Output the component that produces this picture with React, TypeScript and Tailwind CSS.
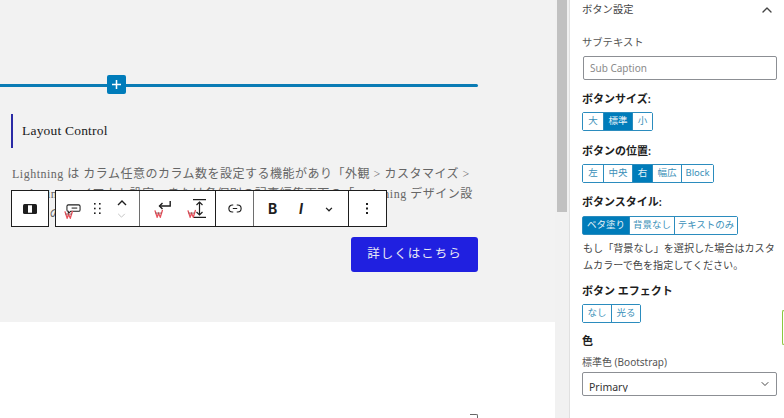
import { ChevronDown, ChevronUp } from "lucide-react";

const sansFont = "font-['Noto_Sans','Open_Sans','Noto_Sans_CJK_JP',sans-serif]";
const serifFont = "font-['Liberation_Serif','Noto_Sans_CJK_JP',serif]";

function VkMark({ className }: { className: string }) {
  return (
    <svg viewBox="0 0 10 10" className={`absolute h-[9px] w-[9px] ${className}`} fill="none">
      <path d="M1 1.5 L3.5 9 L5 5 L7 9 L9.5 1" stroke="#e8515c" strokeWidth="1.5" />
      <path d="M1.5 4.5 H8.5" stroke="#6b3a3a" strokeWidth="0.8" />
    </svg>
  );
}

function SegmentGroup({ items, active }: { items: { label: string; w: string }[]; active?: number }) {
  return (
    <div className="flex h-[19px] w-fit rounded-[2px] border border-[#2b8cbe]">
      {items.map((item, i) => (
        <div
          key={item.label}
          className={`flex items-center justify-center text-[9.5px] ${item.w} ${i > 0 ? "border-l border-[#2b8cbe]" : ""} ${
            i === active ? "bg-[#007cba] text-[#e8f3f8]" : "bg-white text-[#3a8fb8]"
          }`}
        >
          {item.label}
        </div>
      ))}
    </div>
  );
}

function Dots({ className }: { className: string }) {
  return (
    <svg viewBox="0 0 7 11" className={`absolute h-[11px] w-[7px] ${className}`} fill="#1e1e1e">
      <rect x="0" y="0" width="1.6" height="1.6" />
      <rect x="5" y="0" width="1.6" height="1.6" />
      <rect x="0" y="4.7" width="1.6" height="1.6" />
      <rect x="5" y="4.7" width="1.6" height="1.6" />
      <rect x="0" y="9.4" width="1.6" height="1.6" />
      <rect x="5" y="9.4" width="1.6" height="1.6" />
    </svg>
  );
}

function Toolbar() {
  return (
    <div className="absolute left-[11px] top-[190px] flex gap-[6px] text-[#1e1e1e]">
      <div className="flex h-[37px] w-[38px] items-center justify-center border border-[#1e1e1e] bg-white">
        <svg viewBox="0 0 14 10" className="h-[10px] w-[14px]">
          <rect x="0" y="0" width="14" height="10" rx="1.5" fill="#1e1e1e" />
          <rect x="5" y="1.3" width="4" height="7.4" fill="white" />
        </svg>
      </div>
      <div className="relative flex h-[37px] w-[332px] border border-[#1e1e1e] bg-white">
        <div className="w-[84px] border-r border-[#6e6e6e]" />
        <div className="w-[76px] border-r border-[#1e1e1e]" />
        <div className="flex w-[38px] items-center justify-center border-r border-[#6e6e6e]">
          <svg viewBox="0 0 16 10" className="h-[9px] w-[14px]" fill="none" stroke="#1e1e1e" strokeWidth="1.3">
            <path d="M6 1 H5 a4 4 0 0 0 0 8 H6 M10 1 H11 a4 4 0 0 1 0 8 H10 M5.5 5 H10.5" />
          </svg>
        </div>
        <div className="w-[95px] border-r border-[#1e1e1e]" />
        <svg viewBox="0 0 16 10" className="absolute left-[10px] top-[13px] h-[10px] w-[15px]" fill="none" stroke="#1e1e1e" strokeWidth="1.1">
          <path d="M2.5 0.6 H13.5 a1.5 1.5 0 0 1 1.5 1.5 V6 a1.5 1.5 0 0 1 -1.5 1.5 H5 L2.5 9.6 V7.5 A1.5 1.5 0 0 1 1 6 V2.1 A1.5 1.5 0 0 1 2.5 0.6 Z" />
          <path d="M6 4 H12" />
        </svg>
        <VkMark className="left-[8px] top-[19px]" />
        <Dots className="left-[38px] top-[12px]" />
        <svg viewBox="0 0 10 6" className="absolute left-[61px] top-[9px] h-[6px] w-[10px]" fill="none" stroke="#1e1e1e" strokeWidth="1.4">
          <path d="M1 5 L5 1 L9 5" />
        </svg>
        <svg viewBox="0 0 10 6" className="absolute left-[61px] top-[22px] h-[5px] w-[9px]" fill="none" stroke="#c4c4c4" strokeWidth="1.2">
          <path d="M1 1 L5 5 L9 1" />
        </svg>
        <svg viewBox="0 0 13 9" className="absolute left-[102px] top-[10px] h-[9px] w-[13px]" fill="none" stroke="#1e1e1e" strokeWidth="1.4">
          <path d="M12.2 0 V5 H1.5" />
          <path d="M4.5 2 L1.5 5 L4.5 8" />
        </svg>
        <VkMark className="left-[98px] top-[18px]" />
        <svg viewBox="0 0 13 19" className="absolute left-[137px] top-[8px] h-[19px] w-[13px]" fill="none" stroke="#1e1e1e" strokeWidth="1.2">
          <path d="M0 0.7 H13 M0 18.3 H13 M6.5 3 V16 M3.5 6 L6.5 3 L9.5 6 M3.5 13 L6.5 16 L9.5 13" />
        </svg>
        <VkMark className="left-[131px] top-[18px]" />
        <span className="absolute left-[212px] top-[9px] font-['Inter',sans-serif] text-[14px] font-bold leading-[17px]">B</span>
        <span className="absolute left-[243px] top-[9px] font-['Inter',sans-serif] text-[14px] font-bold italic leading-[17px]">I</span>
        <svg viewBox="0 0 9 6" className="absolute left-[269px] top-[16px] h-[5px] w-[8px]" fill="none" stroke="#1e1e1e" strokeWidth="1.5">
          <path d="M1 1 L4.5 4.5 L8 1" />
        </svg>
        <svg viewBox="0 0 2 11" className="absolute left-[310px] top-[12px] h-[11px] w-[2px]" fill="#1e1e1e">
          <rect x="0" y="0" width="2" height="2" />
          <rect x="0" y="4.5" width="2" height="2" />
          <rect x="0" y="9" width="2" height="2" />
        </svg>
      </div>
    </div>
  );
}

function Canvas() {
  return (
    <div className="relative h-[418px] w-[555px] shrink-0 bg-white">
      <div className="h-[322px] bg-[#f2f2f2] pt-[84px]">
        <div className="relative h-[3px] w-[478px] rounded-r-full bg-[#0a7cb5]">
          <div className="absolute left-[107px] top-[-9px] flex h-[19px] w-[19px] items-center justify-center rounded-[2px] bg-[#007cba]">
            <svg viewBox="0 0 10 10" className="h-[9px] w-[9px]" stroke="white" strokeWidth="1.7">
              <path d="M5 0 V10 M0 5 H10" />
            </svg>
          </div>
        </div>
        <div className={`ml-[11px] mt-[27px] flex h-[34px] w-[467px] items-center border-l-2 border-[#2a2aa5] pl-[9px] text-[13.5px] tracking-[0.2px] text-[#1a1a1a] ${serifFont}`}>
          Layout Control
        </div>
        <p className={`ml-[12px] mt-[16px] h-[60px] w-[466px] overflow-hidden text-[12px] leading-[20px] tracking-[0.5px] text-[#666] ${serifFont}`}>
          Lightning は カラム任意のカラム数を設定する機能があり「外観 &gt; カスタマイズ &gt;
          <br />
          Lightning レイアウト設定」または各個別の記事編集画面の「Lightning デザイン設
          <br />
          定」での設定が可能です。
        </p>
        <div className="mr-[77px] mt-[13px] flex justify-end">
          <div className={`flex h-[35px] w-[127px] items-center justify-center rounded-[3px] bg-[#2020e0] text-[12.5px] tracking-[1px] text-[#e8e8f4] ${sansFont}`}>
            詳しくはこちら
          </div>
        </div>
      </div>
      <Toolbar />
      <div className="absolute left-[470px] top-[414px] h-[4px] w-[8px] rounded-tr-[2px] border-r border-t border-[#666]" />
    </div>
  );
}

function Sidebar() {
  return (
    <div className={`relative flex-1 border-l border-[#e0e0e0] bg-white pl-[12px] pr-[7px] text-[#1e1e1e] ${sansFont}`}>
      <div className="flex h-[19px] items-center justify-between pr-[2px] text-[10.3px] text-[#444]">
        <span>ボタン設定</span>
        <ChevronUp size={16} strokeWidth={2} />
      </div>
      <div className="mt-[15px] text-[10.3px] leading-[16px] text-[#555]">サブテキスト</div>
      <div className="ml-[1px] mt-[6px] flex h-[24px] items-center rounded-[2px] border border-[#8c8f94] pl-[6px] text-[10px] text-[#8a8a8a]">
        Sub Caption
      </div>
      <div className="mt-[11px] text-[11px] font-semibold leading-[16px]">ボタンサイズ:</div>
      <div className="mt-[5px]">
        <SegmentGroup
          active={1}
          items={[
            { label: "大", w: "w-[20px]" },
            { label: "標準", w: "w-[29px]" },
            { label: "小", w: "w-[20px]" },
          ]}
        />
      </div>
      <div className="mt-[12px] text-[11px] font-semibold leading-[16px]">ボタンの位置:</div>
      <div className="mt-[5px]">
        <SegmentGroup
          active={2}
          items={[
            { label: "左", w: "w-[20px]" },
            { label: "中央", w: "w-[29px]" },
            { label: "右", w: "w-[20px]" },
            { label: "幅広", w: "w-[29px]" },
            { label: "Block", w: "w-[32px]" },
          ]}
        />
      </div>
      <div className="mt-[11px] text-[11px] font-semibold leading-[16px]">ボタンスタイル:</div>
      <div className="mt-[6px]">
        <SegmentGroup
          active={0}
          items={[
            { label: "ベタ塗り", w: "w-[46px]" },
            { label: "背景なし", w: "w-[45px]" },
            { label: "テキストのみ", w: "w-[63px]" },
          ]}
        />
      </div>
      <p className="mt-[5px] pl-[1px] text-[10.1px] leading-[17px] text-[#444]">
        もし「背景なし」を選択した場合はカスタムカラーで色を指定してください。
      </p>
      <div className="mt-[9px] text-[11px] font-semibold leading-[16px]">ボタン エフェクト</div>
      <div className="mt-[5px]">
        <SegmentGroup
          items={[
            { label: "なし", w: "w-[28px]" },
            { label: "光る", w: "w-[29px]" },
          ]}
        />
      </div>
      <div className="mt-[10px] text-[11px] font-semibold leading-[16px]">色</div>
      <div className="mt-[6px] text-[10px] leading-[14px] text-[#555]">標準色 (Bootstrap)</div>
      <div className="mt-[3px] flex h-[24px] items-center justify-between rounded-[2px] border border-[#8c8f94] pl-[6px] pr-[5px] text-[10.5px] text-[#333]">
        <span className="mt-[6px] h-[10px] overflow-hidden leading-[10px]">Primary</span>
        <ChevronDown size={12} strokeWidth={1.8} />
      </div>
      <div className="absolute right-0 top-[310px] h-[35px] w-[2px] rounded-l-[2px] border border-r-0 border-[#8cc63f]" />
    </div>
  );
}

export default function App() {
  return (
    <div className="flex h-[418px] w-[784px] overflow-hidden bg-white">
      <Canvas />
      <div className="w-[14px] shrink-0 bg-[#f1f1f1] pl-[2px]">
        <div className="h-[212px] w-[10px] bg-[#c1c1c1]" />
      </div>
      <Sidebar />
    </div>
  );
}
